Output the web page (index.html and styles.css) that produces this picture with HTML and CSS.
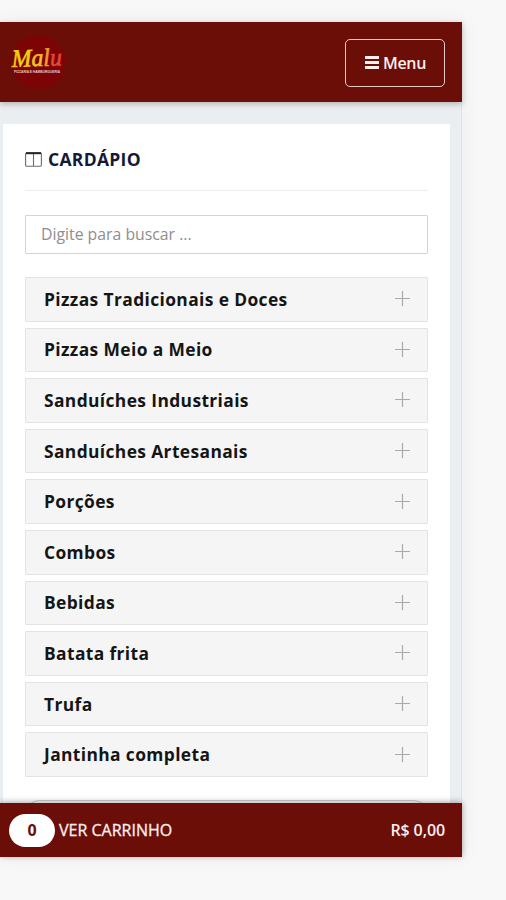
FILE: index.html
```html
<!DOCTYPE html>
<html lang="pt-BR">
<head>
<meta charset="utf-8">
<title>Malu - Cardápio</title>
<link rel="stylesheet" href="styles.css">
</head>
<body>
<div class="app">
  <header class="topbar">
    <svg class="logo" viewBox="0 0 60 60" role="img" aria-label="Malu">
      <circle cx="30" cy="30" r="27" fill="#7d0404"/>
      <text class="logo-name" transform="translate(4 35) rotate(-2)" textLength="50" lengthAdjust="spacingAndGlyphs"><tspan fill="#f0cc14" stroke="#f0cc14">M</tspan><tspan fill="#efc21c" stroke="#efc21c">a</tspan><tspan fill="#ee9a30" stroke="#ee9a30">l</tspan><tspan fill="#e0483a" stroke="#e0483a">u</tspan></text>
      <text class="logo-sub" x="6" y="41" textLength="46" lengthAdjust="spacingAndGlyphs">PIZZARIA E HAMBURGUERIA</text>
    </svg>
    <button class="menu-btn" type="button">
      <svg class="bars" viewBox="0 0 14 13"><path d="M0 1.5h14M0 6.5h14M0 11.5h14"/></svg>
      <span class="menu-label">Menu</span>
    </button>
  </header>
  <main class="content">
    <section class="card">
      <h1 class="title">
        <svg class="columns" viewBox="0 0 17 15"><rect x=".6" y=".8" width="15.8" height="13.4" rx="1.2"/><path d="M8.5 1v13"/><path class="columns-top" d="M1 1.2h15"/></svg>
        <span class="title-text">CARDÁPIO</span>
      </h1>
      <input class="search" type="text" placeholder="Digite para buscar ...">
      <ul class="list">
        <li class="item"><span class="name">Pizzas Tradicionais e Doces</span><svg class="plus" viewBox="0 0 15 15"><path d="M0 7.5h15M7.5 0v15"/></svg></li>
        <li class="item"><span class="name">Pizzas Meio a Meio</span><svg class="plus" viewBox="0 0 15 15"><path d="M0 7.5h15M7.5 0v15"/></svg></li>
        <li class="item"><span class="name">Sanduíches Industriais</span><svg class="plus" viewBox="0 0 15 15"><path d="M0 7.5h15M7.5 0v15"/></svg></li>
        <li class="item"><span class="name">Sanduíches Artesanais</span><svg class="plus" viewBox="0 0 15 15"><path d="M0 7.5h15M7.5 0v15"/></svg></li>
        <li class="item"><span class="name">Porções</span><svg class="plus" viewBox="0 0 15 15"><path d="M0 7.5h15M7.5 0v15"/></svg></li>
        <li class="item"><span class="name">Combos</span><svg class="plus" viewBox="0 0 15 15"><path d="M0 7.5h15M7.5 0v15"/></svg></li>
        <li class="item"><span class="name">Bebidas</span><svg class="plus" viewBox="0 0 15 15"><path d="M0 7.5h15M7.5 0v15"/></svg></li>
        <li class="item"><span class="name">Batata frita</span><svg class="plus" viewBox="0 0 15 15"><path d="M0 7.5h15M7.5 0v15"/></svg></li>
        <li class="item"><span class="name">Trufa</span><svg class="plus" viewBox="0 0 15 15"><path d="M0 7.5h15M7.5 0v15"/></svg></li>
        <li class="item"><span class="name">Jantinha completa</span><svg class="plus" viewBox="0 0 15 15"><path d="M0 7.5h15M7.5 0v15"/></svg></li>
      </ul>
      <div class="next-panel"></div>
    </section>
  </main>
  <footer class="cart">
    <span class="count">0</span>
    <span class="cart-label">VER CARRINHO</span>
    <span class="total">R$ 0,00</span>
  </footer>
</div>
</body>
</html>
```

FILE: styles.css
```css
* { box-sizing: border-box; }

body {
  margin: 0;
  height: 900px;
  padding-top: 22px;
  overflow: hidden;
  background: #f8f8f8;
  font-family: "Open Sans", "Noto Sans", sans-serif;
}

.app {
  display: flex;
  flex-direction: column;
  width: 462px;
  height: 835px;
  background: #ebeef1;
  box-shadow: 0 0 22px rgba(0, 30, 20, .05);
}

.topbar {
  position: relative;
  display: flex;
  align-items: center;
  justify-content: space-between;
  flex: 0 0 80px;
  padding: 0 17px 0 8px;
  background: #6b0e07;
  box-shadow: 0 2px 6px rgba(0, 0, 0, .25);
}

.logo { width: 60px; height: 60px; }

.logo-name {
  font: italic 25px "Liberation Serif", serif;
  stroke-width: .7;
}

.logo-sub {
  font: bold 3.6px "Liberation Sans", sans-serif;
  fill: #e9c9c4;
}

.menu-btn {
  display: flex;
  align-items: center;
  justify-content: center;
  gap: 4px;
  width: 100px;
  height: 48px;
  margin-top: 1px;
  padding: 0 0 0 1px;
  border: 1.5px solid #e3c9c6;
  border-radius: 5px;
  background: none;
  color: #fbefed;
  font: 600 16px/22px "Open Sans", sans-serif;
}

.menu-label { letter-spacing: -.3px; }

.bars {
  width: 14px;
  height: 13px;
  stroke: #fbefed;
  stroke-width: 2.8;
}

.content {
  flex: 1;
  min-height: 0;
  padding: 22px 11px 0 3px;
  border-right: 1px solid #dfe3e6;
}

.card {
  display: flex;
  flex-direction: column;
  height: 100%;
  padding: 0 22px;
  overflow: hidden;
  background: #fff;
}

.title {
  display: flex;
  align-items: center;
  gap: 6px;
  flex: 0 0 67px;
  height: 67px;
  margin: 0 0 24px;
  padding-top: 5px;
  border-bottom: 1px solid #eee;
  color: #14183a;
  font-size: 17.5px;
  font-weight: 700;
}

.title-text {
  margin-top: -2px;
  letter-spacing: .3px;
}

.columns {
  width: 17px;
  height: 15px;
  fill: none;
  stroke: #6c6c70;
  stroke-width: 1.1;
}

.columns-top { stroke: #24242c; stroke-width: 2; }

.search {
  flex: 0 0 39px;
  width: 100%;
  margin-bottom: 23px;
  padding: 0 15px 2px;
  border: 1px solid #cfd6da;
  border-radius: 1px;
  background: #fff;
  font: 15.8px "Open Sans", sans-serif;
}

.search::placeholder { color: #8e8e8e; opacity: 1; }

.list {
  display: flex;
  flex-direction: column;
  gap: 6px;
  margin: 0;
  padding: 0;
  list-style: none;
}

.item {
  display: flex;
  align-items: center;
  justify-content: space-between;
  height: 44.6px;
  padding: 0 17px 1px 18px;
  border: 1px solid #e3e3e3;
  border-radius: 1px;
  background: #f5f5f5;
  color: #151515;
  font-size: 17.4px;
  font-weight: 700;
  letter-spacing: .38px;
}

.plus {
  width: 15px;
  height: 15px;
  stroke: #a9a9a9;
  stroke-width: 1.2;
}

.next-panel {
  flex: 0 0 30px;
  margin: 23px 0 0;
  border: 1px solid #ccc;
  border-radius: 14px;
}

.cart {
  position: relative;
  display: flex;
  align-items: center;
  flex: 0 0 54px;
  padding: 0 17px 0 9px;
  background: #6b0e07;
  color: #fbefed;
  font-size: 16px;
  box-shadow: 0 -1px 6px rgba(0, 0, 0, .35);
}

.count {
  width: 46px;
  height: 33px;
  margin-right: 4px;
  border-radius: 17px;
  background: #fff;
  color: #6b0e07;
  font-size: 16px;
  font-weight: 700;
  line-height: 32px;
  text-align: center;
}

.cart-label {
  -webkit-text-stroke: .3px #fbefed;
  letter-spacing: 0;
}

.total {
  margin-left: auto;
  font-weight: 600;
  letter-spacing: -.1px;
}
```
